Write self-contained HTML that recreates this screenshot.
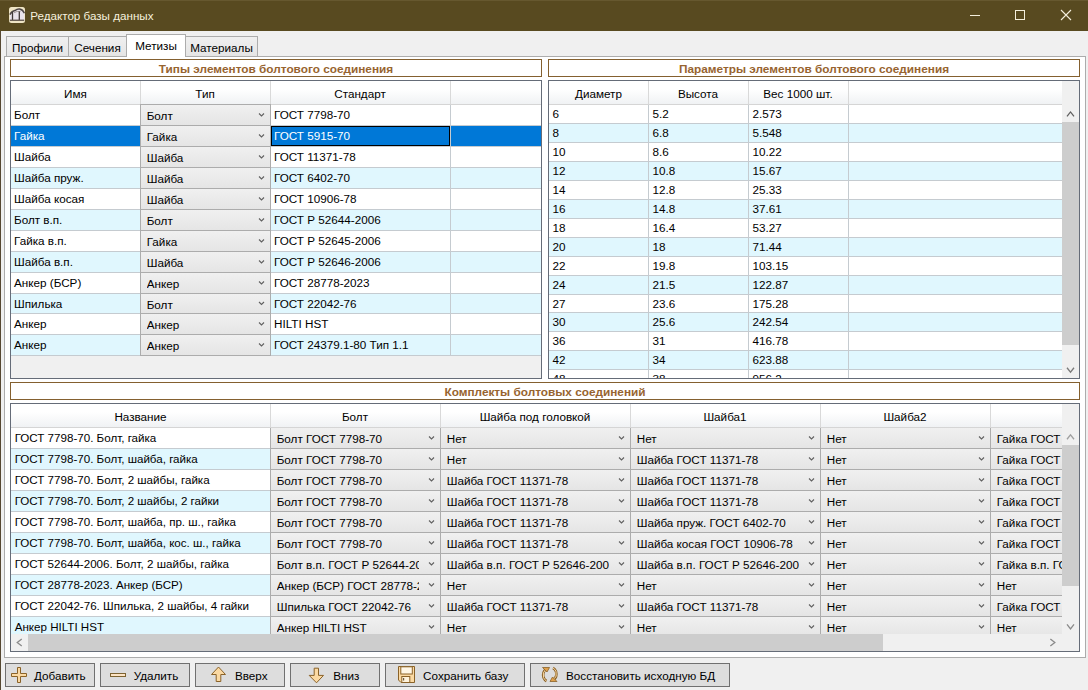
<!DOCTYPE html>
<html><head><meta charset="utf-8"><style>
html,body{margin:0;padding:0;}
body{width:1088px;height:690px;position:relative;overflow:hidden;background:#f0f0f0;font-family:"Liberation Sans", sans-serif;font-size:11.7px;color:#000;}
.t{position:absolute;white-space:pre;overflow:visible;}
.clip{overflow:hidden;}
</style></head><body>
<div style="position:absolute;left:0px;top:0px;width:1088px;height:31px;background:#584a20;"></div>
<div style="position:absolute;left:0px;top:0px;width:1088px;height:1px;background:#66582f;"></div>
<div style="position:absolute;left:0px;top:31px;width:1px;height:659px;background:#564832;"></div>
<svg style="position:absolute;left:9px;top:7px" width="16" height="16" viewBox="0 0 16 16"><rect x="0" y="0" width="16" height="16" rx="2.5" fill="#efe5c6"/><path d="M1 8 Q4 3.5 7 3.2 Q9 2 11 2.3 Q14 3 15.3 6.2 V13 H1 Z" fill="#e9e3ec"/><path d="M0.9 7.6 Q3 4 6 3.6 Q8.2 1.8 10.6 2.1 Q13.8 2.6 15.4 6.2" stroke="#4d4646" stroke-width="1.5" fill="none"/><path d="M5 5.8 Q8 3.6 11.5 4.6" stroke="#9a9090" stroke-width="0.9" fill="none"/><path d="M3.5 5 V13 M10.3 4.6 V13" stroke="#3f3838" stroke-width="1.3"/><rect x="0.8" y="12.6" width="14.4" height="1.3" fill="#5d524a"/></svg>
<div class="t" style="left:30.3px;top:6.8px;height:17px;line-height:17px;color:#f6f1de;font-size:11.64px;">Редактор базы данных</div>
<div style="position:absolute;left:970px;top:15px;width:10px;height:1px;background:#f4efdc;"></div>
<div style="position:absolute;left:1015px;top:10px;width:10px;height:10px;border:1px solid #f4efdc;box-sizing:border-box;"></div>
<svg style="position:absolute;left:1060px;top:9px" width="12" height="12" viewBox="0 0 12 12"><path d="M1 1 L11 11 M11 1 L1 11" stroke="#f4efdc" stroke-width="1.1"/></svg>
<div style="position:absolute;left:4px;top:56px;width:1082px;height:602px;background:#fff;border:1px solid #acacac;box-sizing:border-box;"></div>
<div style="position:absolute;left:6px;top:36px;width:63px;height:21px;background:linear-gradient(#f0f0f0,#e5e5e5);border:1px solid #acacac;box-sizing:border-box;"></div>
<div class="t" style="left:6px;top:37.5px;height:20px;line-height:20px;width:63px;text-align:center;">Профили</div>
<div style="position:absolute;left:68px;top:36px;width:59px;height:21px;background:linear-gradient(#f0f0f0,#e5e5e5);border:1px solid #acacac;box-sizing:border-box;"></div>
<div class="t" style="left:68px;top:37.5px;height:20px;line-height:20px;width:59px;text-align:center;">Сечения</div>
<div style="position:absolute;left:126px;top:34px;width:60px;height:23px;background:#fff;border:1px solid #acacac;border-bottom:none;box-sizing:border-box;z-index:2;"></div>
<div class="t" style="left:126px;top:35px;height:22px;line-height:22px;width:60px;text-align:center;z-index:3;">Метизы</div>
<div style="position:absolute;left:185px;top:36px;width:73px;height:21px;background:linear-gradient(#f0f0f0,#e5e5e5);border:1px solid #acacac;box-sizing:border-box;"></div>
<div class="t" style="left:185px;top:37.5px;height:20px;line-height:20px;width:73px;text-align:center;">Материалы</div>
<div style="position:absolute;left:10px;top:59px;width:532px;height:18px;background:#fff;border:1px solid #84602f;box-sizing:border-box;"></div>
<div class="t" style="left:10px;top:60px;height:18px;line-height:18px;width:532px;text-align:center;font-weight:bold;color:#976430;font-size:11.8px;">Типы элементов болтового соединения</div>
<div style="position:absolute;left:548px;top:59px;width:532px;height:18px;background:#fff;border:1px solid #84602f;box-sizing:border-box;"></div>
<div class="t" style="left:548px;top:60px;height:18px;line-height:18px;width:532px;text-align:center;font-weight:bold;color:#976430;font-size:11.8px;">Параметры элементов болтового соединения</div>
<div style="position:absolute;left:10px;top:382px;width:1070px;height:18px;background:#fff;border:1px solid #84602f;box-sizing:border-box;"></div>
<div class="t" style="left:10px;top:383px;height:18px;line-height:18px;width:1070px;text-align:center;font-weight:bold;color:#976430;font-size:11.8px;">Комплекты болтовых соединений</div>
<div style="position:absolute;left:10px;top:80px;width:532px;height:299px;background:#f0f0f0;border:1px solid #656c78;box-sizing:border-box;"></div>
<div style="position:absolute;left:11px;top:81px;width:530px;height:23px;background:linear-gradient(#ffffff 0%,#ffffff 35%,#f0f2f4 100%);"></div>
<div style="position:absolute;left:11px;top:104px;width:530px;height:1px;background:#d5d5d5;"></div>
<div style="position:absolute;left:140px;top:81px;width:1px;height:23px;background:#d9d9d9;"></div>
<div class="t" style="left:11px;top:82px;height:23px;line-height:23px;width:129px;text-align:center;">Имя</div>
<div style="position:absolute;left:270px;top:81px;width:1px;height:23px;background:#d9d9d9;"></div>
<div class="t" style="left:140px;top:82px;height:23px;line-height:23px;width:130px;text-align:center;">Тип</div>
<div style="position:absolute;left:450px;top:81px;width:1px;height:23px;background:#d9d9d9;"></div>
<div class="t" style="left:270px;top:82px;height:23px;line-height:23px;width:180px;text-align:center;">Стандарт</div>
<div style="position:absolute;left:11px;top:105px;width:530px;height:20px;background:#ffffff;"></div>
<div style="position:absolute;left:11px;top:125px;width:530px;height:1px;background:#c5cbd0;"></div>
<div style="position:absolute;left:450px;top:105px;width:1px;height:20px;background:#c5cbd0;"></div>
<div class="t" style="left:14px;top:105px;height:20px;line-height:20px;color:#000;">Болт</div>
<div style="position:absolute;left:140px;top:104px;width:131px;height:22px;background:linear-gradient(#f0f0f0,#e5e5e5);border:1px solid #acacac;box-sizing:border-box;"></div>
<div class="t clip" style="left:146.7px;top:106px;width:102.3px;height:19px;line-height:20px;">Болт</div>
<svg style="position:absolute;left:0;top:0;overflow:visible" width="1" height="1"><path d="M259.0 113.5 L261.5 116.0 L264.0 113.5" stroke="#606060" stroke-width="1.1" fill="none"/></svg>
<div class="t" style="left:274px;top:105px;height:20px;line-height:20px;color:#000;">ГОСТ 7798-70</div>
<div style="position:absolute;left:11px;top:126px;width:530px;height:20px;background:#0078d7;"></div>
<div style="position:absolute;left:11px;top:146px;width:530px;height:1px;background:#c5cbd0;"></div>
<div style="position:absolute;left:450px;top:126px;width:1px;height:20px;background:#c5cbd0;"></div>
<div class="t" style="left:14px;top:126px;height:20px;line-height:20px;color:#ffffff;">Гайка</div>
<div style="position:absolute;left:140px;top:125px;width:131px;height:22px;background:linear-gradient(#f0f0f0,#e5e5e5);border:1px solid #acacac;box-sizing:border-box;"></div>
<div class="t clip" style="left:146.7px;top:127px;width:102.3px;height:19px;line-height:20px;">Гайка</div>
<svg style="position:absolute;left:0;top:0;overflow:visible" width="1" height="1"><path d="M259.0 134.5 L261.5 137.0 L264.0 134.5" stroke="#606060" stroke-width="1.1" fill="none"/></svg>
<div style="position:absolute;left:271px;top:126px;width:179px;height:20px;border:1px solid #000;box-sizing:border-box;"></div>
<div class="t" style="left:274px;top:126px;height:20px;line-height:20px;color:#ffffff;">ГОСТ 5915-70</div>
<div style="position:absolute;left:11px;top:147px;width:530px;height:20px;background:#ffffff;"></div>
<div style="position:absolute;left:11px;top:167px;width:530px;height:1px;background:#c5cbd0;"></div>
<div style="position:absolute;left:450px;top:147px;width:1px;height:20px;background:#c5cbd0;"></div>
<div class="t" style="left:14px;top:147px;height:20px;line-height:20px;color:#000;">Шайба</div>
<div style="position:absolute;left:140px;top:146px;width:131px;height:22px;background:linear-gradient(#f0f0f0,#e5e5e5);border:1px solid #acacac;box-sizing:border-box;"></div>
<div class="t clip" style="left:146.7px;top:148px;width:102.3px;height:19px;line-height:20px;">Шайба</div>
<svg style="position:absolute;left:0;top:0;overflow:visible" width="1" height="1"><path d="M259.0 155.5 L261.5 158.0 L264.0 155.5" stroke="#606060" stroke-width="1.1" fill="none"/></svg>
<div class="t" style="left:274px;top:147px;height:20px;line-height:20px;color:#000;">ГОСТ 11371-78</div>
<div style="position:absolute;left:11px;top:168px;width:530px;height:20px;background:#e0f7fe;"></div>
<div style="position:absolute;left:11px;top:188px;width:530px;height:1px;background:#c5cbd0;"></div>
<div style="position:absolute;left:450px;top:168px;width:1px;height:20px;background:#c5cbd0;"></div>
<div class="t" style="left:14px;top:168px;height:20px;line-height:20px;color:#000;">Шайба пруж.</div>
<div style="position:absolute;left:140px;top:167px;width:131px;height:22px;background:linear-gradient(#f0f0f0,#e5e5e5);border:1px solid #acacac;box-sizing:border-box;"></div>
<div class="t clip" style="left:146.7px;top:169px;width:102.3px;height:19px;line-height:20px;">Шайба</div>
<svg style="position:absolute;left:0;top:0;overflow:visible" width="1" height="1"><path d="M259.0 176.5 L261.5 179.0 L264.0 176.5" stroke="#606060" stroke-width="1.1" fill="none"/></svg>
<div class="t" style="left:274px;top:168px;height:20px;line-height:20px;color:#000;">ГОСТ 6402-70</div>
<div style="position:absolute;left:11px;top:189px;width:530px;height:20px;background:#ffffff;"></div>
<div style="position:absolute;left:11px;top:209px;width:530px;height:1px;background:#c5cbd0;"></div>
<div style="position:absolute;left:450px;top:189px;width:1px;height:20px;background:#c5cbd0;"></div>
<div class="t" style="left:14px;top:189px;height:20px;line-height:20px;color:#000;">Шайба косая</div>
<div style="position:absolute;left:140px;top:188px;width:131px;height:22px;background:linear-gradient(#f0f0f0,#e5e5e5);border:1px solid #acacac;box-sizing:border-box;"></div>
<div class="t clip" style="left:146.7px;top:190px;width:102.3px;height:19px;line-height:20px;">Шайба</div>
<svg style="position:absolute;left:0;top:0;overflow:visible" width="1" height="1"><path d="M259.0 197.5 L261.5 200.0 L264.0 197.5" stroke="#606060" stroke-width="1.1" fill="none"/></svg>
<div class="t" style="left:274px;top:189px;height:20px;line-height:20px;color:#000;">ГОСТ 10906-78</div>
<div style="position:absolute;left:11px;top:210px;width:530px;height:20px;background:#e0f7fe;"></div>
<div style="position:absolute;left:11px;top:230px;width:530px;height:1px;background:#c5cbd0;"></div>
<div style="position:absolute;left:450px;top:210px;width:1px;height:20px;background:#c5cbd0;"></div>
<div class="t" style="left:14px;top:210px;height:20px;line-height:20px;color:#000;">Болт в.п.</div>
<div style="position:absolute;left:140px;top:209px;width:131px;height:22px;background:linear-gradient(#f0f0f0,#e5e5e5);border:1px solid #acacac;box-sizing:border-box;"></div>
<div class="t clip" style="left:146.7px;top:211px;width:102.3px;height:19px;line-height:20px;">Болт</div>
<svg style="position:absolute;left:0;top:0;overflow:visible" width="1" height="1"><path d="M259.0 218.5 L261.5 221.0 L264.0 218.5" stroke="#606060" stroke-width="1.1" fill="none"/></svg>
<div class="t" style="left:274px;top:210px;height:20px;line-height:20px;color:#000;">ГОСТ Р 52644-2006</div>
<div style="position:absolute;left:11px;top:231px;width:530px;height:20px;background:#ffffff;"></div>
<div style="position:absolute;left:11px;top:251px;width:530px;height:1px;background:#c5cbd0;"></div>
<div style="position:absolute;left:450px;top:231px;width:1px;height:20px;background:#c5cbd0;"></div>
<div class="t" style="left:14px;top:231px;height:20px;line-height:20px;color:#000;">Гайка в.п.</div>
<div style="position:absolute;left:140px;top:230px;width:131px;height:22px;background:linear-gradient(#f0f0f0,#e5e5e5);border:1px solid #acacac;box-sizing:border-box;"></div>
<div class="t clip" style="left:146.7px;top:232px;width:102.3px;height:19px;line-height:20px;">Гайка</div>
<svg style="position:absolute;left:0;top:0;overflow:visible" width="1" height="1"><path d="M259.0 239.5 L261.5 242.0 L264.0 239.5" stroke="#606060" stroke-width="1.1" fill="none"/></svg>
<div class="t" style="left:274px;top:231px;height:20px;line-height:20px;color:#000;">ГОСТ Р 52645-2006</div>
<div style="position:absolute;left:11px;top:252px;width:530px;height:20px;background:#e0f7fe;"></div>
<div style="position:absolute;left:11px;top:272px;width:530px;height:1px;background:#c5cbd0;"></div>
<div style="position:absolute;left:450px;top:252px;width:1px;height:20px;background:#c5cbd0;"></div>
<div class="t" style="left:14px;top:252px;height:20px;line-height:20px;color:#000;">Шайба в.п.</div>
<div style="position:absolute;left:140px;top:251px;width:131px;height:22px;background:linear-gradient(#f0f0f0,#e5e5e5);border:1px solid #acacac;box-sizing:border-box;"></div>
<div class="t clip" style="left:146.7px;top:253px;width:102.3px;height:19px;line-height:20px;">Шайба</div>
<svg style="position:absolute;left:0;top:0;overflow:visible" width="1" height="1"><path d="M259.0 260.5 L261.5 263.0 L264.0 260.5" stroke="#606060" stroke-width="1.1" fill="none"/></svg>
<div class="t" style="left:274px;top:252px;height:20px;line-height:20px;color:#000;">ГОСТ Р 52646-2006</div>
<div style="position:absolute;left:11px;top:273px;width:530px;height:20px;background:#ffffff;"></div>
<div style="position:absolute;left:11px;top:293px;width:530px;height:1px;background:#c5cbd0;"></div>
<div style="position:absolute;left:450px;top:273px;width:1px;height:20px;background:#c5cbd0;"></div>
<div class="t" style="left:14px;top:273px;height:20px;line-height:20px;color:#000;">Анкер (БСР)</div>
<div style="position:absolute;left:140px;top:272px;width:131px;height:22px;background:linear-gradient(#f0f0f0,#e5e5e5);border:1px solid #acacac;box-sizing:border-box;"></div>
<div class="t clip" style="left:146.7px;top:274px;width:102.3px;height:19px;line-height:20px;">Анкер</div>
<svg style="position:absolute;left:0;top:0;overflow:visible" width="1" height="1"><path d="M259.0 281.5 L261.5 284.0 L264.0 281.5" stroke="#606060" stroke-width="1.1" fill="none"/></svg>
<div class="t" style="left:274px;top:273px;height:20px;line-height:20px;color:#000;">ГОСТ 28778-2023</div>
<div style="position:absolute;left:11px;top:294px;width:530px;height:19px;background:#e0f7fe;"></div>
<div style="position:absolute;left:11px;top:313px;width:530px;height:1px;background:#c5cbd0;"></div>
<div style="position:absolute;left:450px;top:294px;width:1px;height:19px;background:#c5cbd0;"></div>
<div class="t" style="left:14px;top:294px;height:19px;line-height:19px;color:#000;">Шпилька</div>
<div style="position:absolute;left:140px;top:293px;width:131px;height:21px;background:linear-gradient(#f0f0f0,#e5e5e5);border:1px solid #acacac;box-sizing:border-box;"></div>
<div class="t clip" style="left:146.7px;top:295px;width:102.3px;height:18px;line-height:19px;">Болт</div>
<svg style="position:absolute;left:0;top:0;overflow:visible" width="1" height="1"><path d="M259.0 302.0 L261.5 304.5 L264.0 302.0" stroke="#606060" stroke-width="1.1" fill="none"/></svg>
<div class="t" style="left:274px;top:294px;height:19px;line-height:19px;color:#000;">ГОСТ 22042-76</div>
<div style="position:absolute;left:11px;top:314px;width:530px;height:20px;background:#ffffff;"></div>
<div style="position:absolute;left:11px;top:334px;width:530px;height:1px;background:#c5cbd0;"></div>
<div style="position:absolute;left:450px;top:314px;width:1px;height:20px;background:#c5cbd0;"></div>
<div class="t" style="left:14px;top:314px;height:20px;line-height:20px;color:#000;">Анкер</div>
<div style="position:absolute;left:140px;top:313px;width:131px;height:22px;background:linear-gradient(#f0f0f0,#e5e5e5);border:1px solid #acacac;box-sizing:border-box;"></div>
<div class="t clip" style="left:146.7px;top:315px;width:102.3px;height:19px;line-height:20px;">Анкер</div>
<svg style="position:absolute;left:0;top:0;overflow:visible" width="1" height="1"><path d="M259.0 322.5 L261.5 325.0 L264.0 322.5" stroke="#606060" stroke-width="1.1" fill="none"/></svg>
<div class="t" style="left:274px;top:314px;height:20px;line-height:20px;color:#000;">HILTI HST</div>
<div style="position:absolute;left:11px;top:335px;width:530px;height:20px;background:#e0f7fe;"></div>
<div style="position:absolute;left:11px;top:355px;width:530px;height:1px;background:#c5cbd0;"></div>
<div style="position:absolute;left:450px;top:335px;width:1px;height:20px;background:#c5cbd0;"></div>
<div class="t" style="left:14px;top:335px;height:20px;line-height:20px;color:#000;">Анкер</div>
<div style="position:absolute;left:140px;top:334px;width:131px;height:22px;background:linear-gradient(#f0f0f0,#e5e5e5);border:1px solid #acacac;box-sizing:border-box;"></div>
<div class="t clip" style="left:146.7px;top:336px;width:102.3px;height:19px;line-height:20px;">Анкер</div>
<svg style="position:absolute;left:0;top:0;overflow:visible" width="1" height="1"><path d="M259.0 343.5 L261.5 346.0 L264.0 343.5" stroke="#606060" stroke-width="1.1" fill="none"/></svg>
<div class="t" style="left:274px;top:335px;height:20px;line-height:20px;color:#000;">ГОСТ 24379.1-80 Тип 1.1</div>
<div style="position:absolute;left:548px;top:80px;width:532px;height:299px;background:#ffffff;border:1px solid #656c78;box-sizing:border-box;"></div>
<div style="position:absolute;left:549px;top:81px;width:513px;height:23px;background:linear-gradient(#ffffff 0%,#ffffff 35%,#f0f2f4 100%);"></div>
<div style="position:absolute;left:549px;top:104px;width:513px;height:1px;background:#d5d5d5;"></div>
<div style="position:absolute;left:648px;top:81px;width:1px;height:23px;background:#d9d9d9;"></div>
<div class="t" style="left:549px;top:82px;height:23px;line-height:23px;width:99px;text-align:center;">Диаметр</div>
<div style="position:absolute;left:748px;top:81px;width:1px;height:23px;background:#d9d9d9;"></div>
<div class="t" style="left:648px;top:82px;height:23px;line-height:23px;width:100px;text-align:center;">Высота</div>
<div style="position:absolute;left:848px;top:81px;width:1px;height:23px;background:#d9d9d9;"></div>
<div class="t" style="left:748px;top:82px;height:23px;line-height:23px;width:100px;text-align:center;">Вес 1000 шт.</div>
<div style="position:absolute;left:549px;top:105px;width:513px;height:18px;background:#ffffff;overflow:hidden;"></div>
<div style="position:absolute;left:549px;top:123px;width:513px;height:1px;background:#c5cbd0;"></div>
<div style="position:absolute;left:648px;top:105px;width:1px;height:18px;background:#c5cbd0;"></div>
<div style="position:absolute;left:748px;top:105px;width:1px;height:18px;background:#c5cbd0;"></div>
<div style="position:absolute;left:848px;top:105px;width:1px;height:18px;background:#c5cbd0;"></div>
<div class="clip" style="position:absolute;left:549px;top:105px;width:512px;height:18px;">
<div class="t" style="left:3.5px;top:0px;height:18px;line-height:18px;">6</div>
<div class="t" style="left:103.5px;top:0px;height:18px;line-height:18px;">5.2</div>
<div class="t" style="left:203.5px;top:0px;height:18px;line-height:18px;">2.573</div>
</div>
<div style="position:absolute;left:549px;top:124px;width:513px;height:18px;background:#e0f7fe;overflow:hidden;"></div>
<div style="position:absolute;left:549px;top:142px;width:513px;height:1px;background:#c5cbd0;"></div>
<div style="position:absolute;left:648px;top:124px;width:1px;height:18px;background:#c5cbd0;"></div>
<div style="position:absolute;left:748px;top:124px;width:1px;height:18px;background:#c5cbd0;"></div>
<div style="position:absolute;left:848px;top:124px;width:1px;height:18px;background:#c5cbd0;"></div>
<div class="clip" style="position:absolute;left:549px;top:124px;width:512px;height:18px;">
<div class="t" style="left:3.5px;top:0px;height:18px;line-height:18px;">8</div>
<div class="t" style="left:103.5px;top:0px;height:18px;line-height:18px;">6.8</div>
<div class="t" style="left:203.5px;top:0px;height:18px;line-height:18px;">5.548</div>
</div>
<div style="position:absolute;left:549px;top:143px;width:513px;height:18px;background:#ffffff;overflow:hidden;"></div>
<div style="position:absolute;left:549px;top:161px;width:513px;height:1px;background:#c5cbd0;"></div>
<div style="position:absolute;left:648px;top:143px;width:1px;height:18px;background:#c5cbd0;"></div>
<div style="position:absolute;left:748px;top:143px;width:1px;height:18px;background:#c5cbd0;"></div>
<div style="position:absolute;left:848px;top:143px;width:1px;height:18px;background:#c5cbd0;"></div>
<div class="clip" style="position:absolute;left:549px;top:143px;width:512px;height:18px;">
<div class="t" style="left:3.5px;top:0px;height:18px;line-height:18px;">10</div>
<div class="t" style="left:103.5px;top:0px;height:18px;line-height:18px;">8.6</div>
<div class="t" style="left:203.5px;top:0px;height:18px;line-height:18px;">10.22</div>
</div>
<div style="position:absolute;left:549px;top:162px;width:513px;height:18px;background:#e0f7fe;overflow:hidden;"></div>
<div style="position:absolute;left:549px;top:180px;width:513px;height:1px;background:#c5cbd0;"></div>
<div style="position:absolute;left:648px;top:162px;width:1px;height:18px;background:#c5cbd0;"></div>
<div style="position:absolute;left:748px;top:162px;width:1px;height:18px;background:#c5cbd0;"></div>
<div style="position:absolute;left:848px;top:162px;width:1px;height:18px;background:#c5cbd0;"></div>
<div class="clip" style="position:absolute;left:549px;top:162px;width:512px;height:18px;">
<div class="t" style="left:3.5px;top:0px;height:18px;line-height:18px;">12</div>
<div class="t" style="left:103.5px;top:0px;height:18px;line-height:18px;">10.8</div>
<div class="t" style="left:203.5px;top:0px;height:18px;line-height:18px;">15.67</div>
</div>
<div style="position:absolute;left:549px;top:181px;width:513px;height:18px;background:#ffffff;overflow:hidden;"></div>
<div style="position:absolute;left:549px;top:199px;width:513px;height:1px;background:#c5cbd0;"></div>
<div style="position:absolute;left:648px;top:181px;width:1px;height:18px;background:#c5cbd0;"></div>
<div style="position:absolute;left:748px;top:181px;width:1px;height:18px;background:#c5cbd0;"></div>
<div style="position:absolute;left:848px;top:181px;width:1px;height:18px;background:#c5cbd0;"></div>
<div class="clip" style="position:absolute;left:549px;top:181px;width:512px;height:18px;">
<div class="t" style="left:3.5px;top:0px;height:18px;line-height:18px;">14</div>
<div class="t" style="left:103.5px;top:0px;height:18px;line-height:18px;">12.8</div>
<div class="t" style="left:203.5px;top:0px;height:18px;line-height:18px;">25.33</div>
</div>
<div style="position:absolute;left:549px;top:200px;width:513px;height:18px;background:#e0f7fe;overflow:hidden;"></div>
<div style="position:absolute;left:549px;top:218px;width:513px;height:1px;background:#c5cbd0;"></div>
<div style="position:absolute;left:648px;top:200px;width:1px;height:18px;background:#c5cbd0;"></div>
<div style="position:absolute;left:748px;top:200px;width:1px;height:18px;background:#c5cbd0;"></div>
<div style="position:absolute;left:848px;top:200px;width:1px;height:18px;background:#c5cbd0;"></div>
<div class="clip" style="position:absolute;left:549px;top:200px;width:512px;height:18px;">
<div class="t" style="left:3.5px;top:0px;height:18px;line-height:18px;">16</div>
<div class="t" style="left:103.5px;top:0px;height:18px;line-height:18px;">14.8</div>
<div class="t" style="left:203.5px;top:0px;height:18px;line-height:18px;">37.61</div>
</div>
<div style="position:absolute;left:549px;top:219px;width:513px;height:18px;background:#ffffff;overflow:hidden;"></div>
<div style="position:absolute;left:549px;top:237px;width:513px;height:1px;background:#c5cbd0;"></div>
<div style="position:absolute;left:648px;top:219px;width:1px;height:18px;background:#c5cbd0;"></div>
<div style="position:absolute;left:748px;top:219px;width:1px;height:18px;background:#c5cbd0;"></div>
<div style="position:absolute;left:848px;top:219px;width:1px;height:18px;background:#c5cbd0;"></div>
<div class="clip" style="position:absolute;left:549px;top:219px;width:512px;height:18px;">
<div class="t" style="left:3.5px;top:0px;height:18px;line-height:18px;">18</div>
<div class="t" style="left:103.5px;top:0px;height:18px;line-height:18px;">16.4</div>
<div class="t" style="left:203.5px;top:0px;height:18px;line-height:18px;">53.27</div>
</div>
<div style="position:absolute;left:549px;top:238px;width:513px;height:18px;background:#e0f7fe;overflow:hidden;"></div>
<div style="position:absolute;left:549px;top:256px;width:513px;height:1px;background:#c5cbd0;"></div>
<div style="position:absolute;left:648px;top:238px;width:1px;height:18px;background:#c5cbd0;"></div>
<div style="position:absolute;left:748px;top:238px;width:1px;height:18px;background:#c5cbd0;"></div>
<div style="position:absolute;left:848px;top:238px;width:1px;height:18px;background:#c5cbd0;"></div>
<div class="clip" style="position:absolute;left:549px;top:238px;width:512px;height:18px;">
<div class="t" style="left:3.5px;top:0px;height:18px;line-height:18px;">20</div>
<div class="t" style="left:103.5px;top:0px;height:18px;line-height:18px;">18</div>
<div class="t" style="left:203.5px;top:0px;height:18px;line-height:18px;">71.44</div>
</div>
<div style="position:absolute;left:549px;top:257px;width:513px;height:18px;background:#ffffff;overflow:hidden;"></div>
<div style="position:absolute;left:549px;top:275px;width:513px;height:1px;background:#c5cbd0;"></div>
<div style="position:absolute;left:648px;top:257px;width:1px;height:18px;background:#c5cbd0;"></div>
<div style="position:absolute;left:748px;top:257px;width:1px;height:18px;background:#c5cbd0;"></div>
<div style="position:absolute;left:848px;top:257px;width:1px;height:18px;background:#c5cbd0;"></div>
<div class="clip" style="position:absolute;left:549px;top:257px;width:512px;height:18px;">
<div class="t" style="left:3.5px;top:0px;height:18px;line-height:18px;">22</div>
<div class="t" style="left:103.5px;top:0px;height:18px;line-height:18px;">19.8</div>
<div class="t" style="left:203.5px;top:0px;height:18px;line-height:18px;">103.15</div>
</div>
<div style="position:absolute;left:549px;top:276px;width:513px;height:18px;background:#e0f7fe;overflow:hidden;"></div>
<div style="position:absolute;left:549px;top:294px;width:513px;height:1px;background:#c5cbd0;"></div>
<div style="position:absolute;left:648px;top:276px;width:1px;height:18px;background:#c5cbd0;"></div>
<div style="position:absolute;left:748px;top:276px;width:1px;height:18px;background:#c5cbd0;"></div>
<div style="position:absolute;left:848px;top:276px;width:1px;height:18px;background:#c5cbd0;"></div>
<div class="clip" style="position:absolute;left:549px;top:276px;width:512px;height:18px;">
<div class="t" style="left:3.5px;top:0px;height:18px;line-height:18px;">24</div>
<div class="t" style="left:103.5px;top:0px;height:18px;line-height:18px;">21.5</div>
<div class="t" style="left:203.5px;top:0px;height:18px;line-height:18px;">122.87</div>
</div>
<div style="position:absolute;left:549px;top:295px;width:513px;height:17px;background:#ffffff;overflow:hidden;"></div>
<div style="position:absolute;left:549px;top:312px;width:513px;height:1px;background:#c5cbd0;"></div>
<div style="position:absolute;left:648px;top:295px;width:1px;height:17px;background:#c5cbd0;"></div>
<div style="position:absolute;left:748px;top:295px;width:1px;height:17px;background:#c5cbd0;"></div>
<div style="position:absolute;left:848px;top:295px;width:1px;height:17px;background:#c5cbd0;"></div>
<div class="clip" style="position:absolute;left:549px;top:295px;width:512px;height:17px;">
<div class="t" style="left:3.5px;top:0px;height:18px;line-height:18px;">27</div>
<div class="t" style="left:103.5px;top:0px;height:18px;line-height:18px;">23.6</div>
<div class="t" style="left:203.5px;top:0px;height:18px;line-height:18px;">175.28</div>
</div>
<div style="position:absolute;left:549px;top:313px;width:513px;height:18px;background:#e0f7fe;overflow:hidden;"></div>
<div style="position:absolute;left:549px;top:331px;width:513px;height:1px;background:#c5cbd0;"></div>
<div style="position:absolute;left:648px;top:313px;width:1px;height:18px;background:#c5cbd0;"></div>
<div style="position:absolute;left:748px;top:313px;width:1px;height:18px;background:#c5cbd0;"></div>
<div style="position:absolute;left:848px;top:313px;width:1px;height:18px;background:#c5cbd0;"></div>
<div class="clip" style="position:absolute;left:549px;top:313px;width:512px;height:18px;">
<div class="t" style="left:3.5px;top:0px;height:18px;line-height:18px;">30</div>
<div class="t" style="left:103.5px;top:0px;height:18px;line-height:18px;">25.6</div>
<div class="t" style="left:203.5px;top:0px;height:18px;line-height:18px;">242.54</div>
</div>
<div style="position:absolute;left:549px;top:332px;width:513px;height:18px;background:#ffffff;overflow:hidden;"></div>
<div style="position:absolute;left:549px;top:350px;width:513px;height:1px;background:#c5cbd0;"></div>
<div style="position:absolute;left:648px;top:332px;width:1px;height:18px;background:#c5cbd0;"></div>
<div style="position:absolute;left:748px;top:332px;width:1px;height:18px;background:#c5cbd0;"></div>
<div style="position:absolute;left:848px;top:332px;width:1px;height:18px;background:#c5cbd0;"></div>
<div class="clip" style="position:absolute;left:549px;top:332px;width:512px;height:18px;">
<div class="t" style="left:3.5px;top:0px;height:18px;line-height:18px;">36</div>
<div class="t" style="left:103.5px;top:0px;height:18px;line-height:18px;">31</div>
<div class="t" style="left:203.5px;top:0px;height:18px;line-height:18px;">416.78</div>
</div>
<div style="position:absolute;left:549px;top:351px;width:513px;height:18px;background:#e0f7fe;overflow:hidden;"></div>
<div style="position:absolute;left:549px;top:369px;width:513px;height:1px;background:#c5cbd0;"></div>
<div style="position:absolute;left:648px;top:351px;width:1px;height:18px;background:#c5cbd0;"></div>
<div style="position:absolute;left:748px;top:351px;width:1px;height:18px;background:#c5cbd0;"></div>
<div style="position:absolute;left:848px;top:351px;width:1px;height:18px;background:#c5cbd0;"></div>
<div class="clip" style="position:absolute;left:549px;top:351px;width:512px;height:18px;">
<div class="t" style="left:3.5px;top:0px;height:18px;line-height:18px;">42</div>
<div class="t" style="left:103.5px;top:0px;height:18px;line-height:18px;">34</div>
<div class="t" style="left:203.5px;top:0px;height:18px;line-height:18px;">623.88</div>
</div>
<div style="position:absolute;left:549px;top:370px;width:513px;height:8px;background:#ffffff;overflow:hidden;"></div>
<div style="position:absolute;left:648px;top:370px;width:1px;height:8px;background:#c5cbd0;"></div>
<div style="position:absolute;left:748px;top:370px;width:1px;height:8px;background:#c5cbd0;"></div>
<div style="position:absolute;left:848px;top:370px;width:1px;height:8px;background:#c5cbd0;"></div>
<div class="clip" style="position:absolute;left:549px;top:370px;width:512px;height:8px;">
<div class="t" style="left:3.5px;top:0px;height:18px;line-height:18px;">48</div>
<div class="t" style="left:103.5px;top:0px;height:18px;line-height:18px;">38</div>
<div class="t" style="left:203.5px;top:0px;height:18px;line-height:18px;">956.2</div>
</div>
<div style="position:absolute;left:1062px;top:81px;width:17px;height:297px;background:#f0f0f0;"></div>
<div style="position:absolute;left:1062px;top:122px;width:17px;height:223px;background:#cdcdcd;"></div>
<svg style="position:absolute;left:0;top:0;overflow:visible" width="1" height="1"><path d="M1067.0 116.45 L1070.5 111.95 L1074.0 116.45" stroke="#606060" stroke-width="1.3" fill="none"/></svg>
<svg style="position:absolute;left:0;top:0;overflow:visible" width="1" height="1"><path d="M1067.0 367.75 L1070.5 372.25 L1074.0 367.75" stroke="#7a7a7a" stroke-width="1.3" fill="none"/></svg>
<div style="position:absolute;left:10px;top:403px;width:1070px;height:249px;background:#ffffff;border:1px solid #656c78;box-sizing:border-box;"></div>
<div style="position:absolute;left:11px;top:404px;width:1051px;height:23px;background:linear-gradient(#ffffff 0%,#ffffff 35%,#f0f2f4 100%);"></div>
<div style="position:absolute;left:11px;top:427px;width:1051px;height:1px;background:#d5d5d5;"></div>
<div style="position:absolute;left:270px;top:404px;width:1px;height:23px;background:#d9d9d9;"></div>
<div class="t" style="left:11px;top:405px;height:23px;line-height:23px;width:259px;text-align:center;">Название</div>
<div style="position:absolute;left:440px;top:404px;width:1px;height:23px;background:#d9d9d9;"></div>
<div class="t" style="left:270px;top:405px;height:23px;line-height:23px;width:170px;text-align:center;">Болт</div>
<div style="position:absolute;left:630px;top:404px;width:1px;height:23px;background:#d9d9d9;"></div>
<div class="t" style="left:440px;top:405px;height:23px;line-height:23px;width:190px;text-align:center;">Шайба под головкой</div>
<div style="position:absolute;left:820px;top:404px;width:1px;height:23px;background:#d9d9d9;"></div>
<div class="t" style="left:630px;top:405px;height:23px;line-height:23px;width:190px;text-align:center;">Шайба1</div>
<div style="position:absolute;left:990px;top:404px;width:1px;height:23px;background:#d9d9d9;"></div>
<div class="t" style="left:820px;top:405px;height:23px;line-height:23px;width:170px;text-align:center;">Шайба2</div>
<div style="position:absolute;left:1180px;top:404px;width:1px;height:23px;background:#d9d9d9;"></div>
<div class="clip" style="position:absolute;left:11px;top:428px;width:1051px;height:206px;">
<div style="position:absolute;left:0px;top:0px;width:1051px;height:20px;background:#ffffff;"></div>
<div style="position:absolute;left:0px;top:20px;width:1051px;height:1px;background:#c5cbd0;"></div>
<div class="t" style="left:3.7px;top:0px;height:20px;line-height:20px;font-size:11.6px;">ГОСТ 7798-70. Болт, гайка</div>
<div style="position:absolute;left:259px;top:-1px;width:171px;height:22px;background:linear-gradient(#f0f0f0,#e5e5e5);border:1px solid #acacac;box-sizing:border-box;"></div>
<div class="t clip" style="left:265.7px;top:1px;width:142.3px;height:19px;line-height:20px;">Болт ГОСТ 7798-70</div>
<svg style="position:absolute;left:0;top:0;overflow:visible" width="1" height="1"><path d="M418.0 8.5 L420.5 11.0 L423.0 8.5" stroke="#606060" stroke-width="1.1" fill="none"/></svg>
<div style="position:absolute;left:429px;top:-1px;width:191px;height:22px;background:linear-gradient(#f0f0f0,#e5e5e5);border:1px solid #acacac;box-sizing:border-box;"></div>
<div class="t clip" style="left:435.7px;top:1px;width:162.3px;height:19px;line-height:20px;">Нет</div>
<svg style="position:absolute;left:0;top:0;overflow:visible" width="1" height="1"><path d="M608.0 8.5 L610.5 11.0 L613.0 8.5" stroke="#606060" stroke-width="1.1" fill="none"/></svg>
<div style="position:absolute;left:619px;top:-1px;width:191px;height:22px;background:linear-gradient(#f0f0f0,#e5e5e5);border:1px solid #acacac;box-sizing:border-box;"></div>
<div class="t clip" style="left:625.7px;top:1px;width:162.3px;height:19px;line-height:20px;">Нет</div>
<svg style="position:absolute;left:0;top:0;overflow:visible" width="1" height="1"><path d="M798.0 8.5 L800.5 11.0 L803.0 8.5" stroke="#606060" stroke-width="1.1" fill="none"/></svg>
<div style="position:absolute;left:809px;top:-1px;width:171px;height:22px;background:linear-gradient(#f0f0f0,#e5e5e5);border:1px solid #acacac;box-sizing:border-box;"></div>
<div class="t clip" style="left:815.7px;top:1px;width:142.3px;height:19px;line-height:20px;">Нет</div>
<svg style="position:absolute;left:0;top:0;overflow:visible" width="1" height="1"><path d="M968.0 8.5 L970.5 11.0 L973.0 8.5" stroke="#606060" stroke-width="1.1" fill="none"/></svg>
<div style="position:absolute;left:979px;top:-1px;width:191px;height:22px;background:linear-gradient(#f0f0f0,#e5e5e5);border:1px solid #acacac;box-sizing:border-box;"></div>
<div class="t clip" style="left:985.7px;top:1px;width:162.3px;height:19px;line-height:20px;">Гайка ГОСТ 5915-70</div>
<svg style="position:absolute;left:0;top:0;overflow:visible" width="1" height="1"><path d="M1158.0 8.5 L1160.5 11.0 L1163.0 8.5" stroke="#606060" stroke-width="1.1" fill="none"/></svg>
<div style="position:absolute;left:0px;top:21px;width:1051px;height:20px;background:#e0f7fe;"></div>
<div style="position:absolute;left:0px;top:41px;width:1051px;height:1px;background:#c5cbd0;"></div>
<div class="t" style="left:3.7px;top:21px;height:20px;line-height:20px;font-size:11.6px;">ГОСТ 7798-70. Болт, шайба, гайка</div>
<div style="position:absolute;left:259px;top:20px;width:171px;height:22px;background:linear-gradient(#f0f0f0,#e5e5e5);border:1px solid #acacac;box-sizing:border-box;"></div>
<div class="t clip" style="left:265.7px;top:22px;width:142.3px;height:19px;line-height:20px;">Болт ГОСТ 7798-70</div>
<svg style="position:absolute;left:0;top:0;overflow:visible" width="1" height="1"><path d="M418.0 29.5 L420.5 32.0 L423.0 29.5" stroke="#606060" stroke-width="1.1" fill="none"/></svg>
<div style="position:absolute;left:429px;top:20px;width:191px;height:22px;background:linear-gradient(#f0f0f0,#e5e5e5);border:1px solid #acacac;box-sizing:border-box;"></div>
<div class="t clip" style="left:435.7px;top:22px;width:162.3px;height:19px;line-height:20px;">Нет</div>
<svg style="position:absolute;left:0;top:0;overflow:visible" width="1" height="1"><path d="M608.0 29.5 L610.5 32.0 L613.0 29.5" stroke="#606060" stroke-width="1.1" fill="none"/></svg>
<div style="position:absolute;left:619px;top:20px;width:191px;height:22px;background:linear-gradient(#f0f0f0,#e5e5e5);border:1px solid #acacac;box-sizing:border-box;"></div>
<div class="t clip" style="left:625.7px;top:22px;width:162.3px;height:19px;line-height:20px;">Шайба ГОСТ 11371-78</div>
<svg style="position:absolute;left:0;top:0;overflow:visible" width="1" height="1"><path d="M798.0 29.5 L800.5 32.0 L803.0 29.5" stroke="#606060" stroke-width="1.1" fill="none"/></svg>
<div style="position:absolute;left:809px;top:20px;width:171px;height:22px;background:linear-gradient(#f0f0f0,#e5e5e5);border:1px solid #acacac;box-sizing:border-box;"></div>
<div class="t clip" style="left:815.7px;top:22px;width:142.3px;height:19px;line-height:20px;">Нет</div>
<svg style="position:absolute;left:0;top:0;overflow:visible" width="1" height="1"><path d="M968.0 29.5 L970.5 32.0 L973.0 29.5" stroke="#606060" stroke-width="1.1" fill="none"/></svg>
<div style="position:absolute;left:979px;top:20px;width:191px;height:22px;background:linear-gradient(#f0f0f0,#e5e5e5);border:1px solid #acacac;box-sizing:border-box;"></div>
<div class="t clip" style="left:985.7px;top:22px;width:162.3px;height:19px;line-height:20px;">Гайка ГОСТ 5915-70</div>
<svg style="position:absolute;left:0;top:0;overflow:visible" width="1" height="1"><path d="M1158.0 29.5 L1160.5 32.0 L1163.0 29.5" stroke="#606060" stroke-width="1.1" fill="none"/></svg>
<div style="position:absolute;left:0px;top:42px;width:1051px;height:20px;background:#ffffff;"></div>
<div style="position:absolute;left:0px;top:62px;width:1051px;height:1px;background:#c5cbd0;"></div>
<div class="t" style="left:3.7px;top:42px;height:20px;line-height:20px;font-size:11.6px;">ГОСТ 7798-70. Болт, 2 шайбы, гайка</div>
<div style="position:absolute;left:259px;top:41px;width:171px;height:22px;background:linear-gradient(#f0f0f0,#e5e5e5);border:1px solid #acacac;box-sizing:border-box;"></div>
<div class="t clip" style="left:265.7px;top:43px;width:142.3px;height:19px;line-height:20px;">Болт ГОСТ 7798-70</div>
<svg style="position:absolute;left:0;top:0;overflow:visible" width="1" height="1"><path d="M418.0 50.5 L420.5 53.0 L423.0 50.5" stroke="#606060" stroke-width="1.1" fill="none"/></svg>
<div style="position:absolute;left:429px;top:41px;width:191px;height:22px;background:linear-gradient(#f0f0f0,#e5e5e5);border:1px solid #acacac;box-sizing:border-box;"></div>
<div class="t clip" style="left:435.7px;top:43px;width:162.3px;height:19px;line-height:20px;">Шайба ГОСТ 11371-78</div>
<svg style="position:absolute;left:0;top:0;overflow:visible" width="1" height="1"><path d="M608.0 50.5 L610.5 53.0 L613.0 50.5" stroke="#606060" stroke-width="1.1" fill="none"/></svg>
<div style="position:absolute;left:619px;top:41px;width:191px;height:22px;background:linear-gradient(#f0f0f0,#e5e5e5);border:1px solid #acacac;box-sizing:border-box;"></div>
<div class="t clip" style="left:625.7px;top:43px;width:162.3px;height:19px;line-height:20px;">Шайба ГОСТ 11371-78</div>
<svg style="position:absolute;left:0;top:0;overflow:visible" width="1" height="1"><path d="M798.0 50.5 L800.5 53.0 L803.0 50.5" stroke="#606060" stroke-width="1.1" fill="none"/></svg>
<div style="position:absolute;left:809px;top:41px;width:171px;height:22px;background:linear-gradient(#f0f0f0,#e5e5e5);border:1px solid #acacac;box-sizing:border-box;"></div>
<div class="t clip" style="left:815.7px;top:43px;width:142.3px;height:19px;line-height:20px;">Нет</div>
<svg style="position:absolute;left:0;top:0;overflow:visible" width="1" height="1"><path d="M968.0 50.5 L970.5 53.0 L973.0 50.5" stroke="#606060" stroke-width="1.1" fill="none"/></svg>
<div style="position:absolute;left:979px;top:41px;width:191px;height:22px;background:linear-gradient(#f0f0f0,#e5e5e5);border:1px solid #acacac;box-sizing:border-box;"></div>
<div class="t clip" style="left:985.7px;top:43px;width:162.3px;height:19px;line-height:20px;">Гайка ГОСТ 5915-70</div>
<svg style="position:absolute;left:0;top:0;overflow:visible" width="1" height="1"><path d="M1158.0 50.5 L1160.5 53.0 L1163.0 50.5" stroke="#606060" stroke-width="1.1" fill="none"/></svg>
<div style="position:absolute;left:0px;top:63px;width:1051px;height:20px;background:#e0f7fe;"></div>
<div style="position:absolute;left:0px;top:83px;width:1051px;height:1px;background:#c5cbd0;"></div>
<div class="t" style="left:3.7px;top:63px;height:20px;line-height:20px;font-size:11.6px;">ГОСТ 7798-70. Болт, 2 шайбы, 2 гайки</div>
<div style="position:absolute;left:259px;top:62px;width:171px;height:22px;background:linear-gradient(#f0f0f0,#e5e5e5);border:1px solid #acacac;box-sizing:border-box;"></div>
<div class="t clip" style="left:265.7px;top:64px;width:142.3px;height:19px;line-height:20px;">Болт ГОСТ 7798-70</div>
<svg style="position:absolute;left:0;top:0;overflow:visible" width="1" height="1"><path d="M418.0 71.5 L420.5 74.0 L423.0 71.5" stroke="#606060" stroke-width="1.1" fill="none"/></svg>
<div style="position:absolute;left:429px;top:62px;width:191px;height:22px;background:linear-gradient(#f0f0f0,#e5e5e5);border:1px solid #acacac;box-sizing:border-box;"></div>
<div class="t clip" style="left:435.7px;top:64px;width:162.3px;height:19px;line-height:20px;">Шайба ГОСТ 11371-78</div>
<svg style="position:absolute;left:0;top:0;overflow:visible" width="1" height="1"><path d="M608.0 71.5 L610.5 74.0 L613.0 71.5" stroke="#606060" stroke-width="1.1" fill="none"/></svg>
<div style="position:absolute;left:619px;top:62px;width:191px;height:22px;background:linear-gradient(#f0f0f0,#e5e5e5);border:1px solid #acacac;box-sizing:border-box;"></div>
<div class="t clip" style="left:625.7px;top:64px;width:162.3px;height:19px;line-height:20px;">Шайба ГОСТ 11371-78</div>
<svg style="position:absolute;left:0;top:0;overflow:visible" width="1" height="1"><path d="M798.0 71.5 L800.5 74.0 L803.0 71.5" stroke="#606060" stroke-width="1.1" fill="none"/></svg>
<div style="position:absolute;left:809px;top:62px;width:171px;height:22px;background:linear-gradient(#f0f0f0,#e5e5e5);border:1px solid #acacac;box-sizing:border-box;"></div>
<div class="t clip" style="left:815.7px;top:64px;width:142.3px;height:19px;line-height:20px;">Нет</div>
<svg style="position:absolute;left:0;top:0;overflow:visible" width="1" height="1"><path d="M968.0 71.5 L970.5 74.0 L973.0 71.5" stroke="#606060" stroke-width="1.1" fill="none"/></svg>
<div style="position:absolute;left:979px;top:62px;width:191px;height:22px;background:linear-gradient(#f0f0f0,#e5e5e5);border:1px solid #acacac;box-sizing:border-box;"></div>
<div class="t clip" style="left:985.7px;top:64px;width:162.3px;height:19px;line-height:20px;">Гайка ГОСТ 5915-70</div>
<svg style="position:absolute;left:0;top:0;overflow:visible" width="1" height="1"><path d="M1158.0 71.5 L1160.5 74.0 L1163.0 71.5" stroke="#606060" stroke-width="1.1" fill="none"/></svg>
<div style="position:absolute;left:0px;top:84px;width:1051px;height:20px;background:#ffffff;"></div>
<div style="position:absolute;left:0px;top:104px;width:1051px;height:1px;background:#c5cbd0;"></div>
<div class="t" style="left:3.7px;top:84px;height:20px;line-height:20px;font-size:11.6px;">ГОСТ 7798-70. Болт, шайба, пр. ш., гайка</div>
<div style="position:absolute;left:259px;top:83px;width:171px;height:22px;background:linear-gradient(#f0f0f0,#e5e5e5);border:1px solid #acacac;box-sizing:border-box;"></div>
<div class="t clip" style="left:265.7px;top:85px;width:142.3px;height:19px;line-height:20px;">Болт ГОСТ 7798-70</div>
<svg style="position:absolute;left:0;top:0;overflow:visible" width="1" height="1"><path d="M418.0 92.5 L420.5 95.0 L423.0 92.5" stroke="#606060" stroke-width="1.1" fill="none"/></svg>
<div style="position:absolute;left:429px;top:83px;width:191px;height:22px;background:linear-gradient(#f0f0f0,#e5e5e5);border:1px solid #acacac;box-sizing:border-box;"></div>
<div class="t clip" style="left:435.7px;top:85px;width:162.3px;height:19px;line-height:20px;">Шайба ГОСТ 11371-78</div>
<svg style="position:absolute;left:0;top:0;overflow:visible" width="1" height="1"><path d="M608.0 92.5 L610.5 95.0 L613.0 92.5" stroke="#606060" stroke-width="1.1" fill="none"/></svg>
<div style="position:absolute;left:619px;top:83px;width:191px;height:22px;background:linear-gradient(#f0f0f0,#e5e5e5);border:1px solid #acacac;box-sizing:border-box;"></div>
<div class="t clip" style="left:625.7px;top:85px;width:162.3px;height:19px;line-height:20px;">Шайба пруж. ГОСТ 6402-70</div>
<svg style="position:absolute;left:0;top:0;overflow:visible" width="1" height="1"><path d="M798.0 92.5 L800.5 95.0 L803.0 92.5" stroke="#606060" stroke-width="1.1" fill="none"/></svg>
<div style="position:absolute;left:809px;top:83px;width:171px;height:22px;background:linear-gradient(#f0f0f0,#e5e5e5);border:1px solid #acacac;box-sizing:border-box;"></div>
<div class="t clip" style="left:815.7px;top:85px;width:142.3px;height:19px;line-height:20px;">Нет</div>
<svg style="position:absolute;left:0;top:0;overflow:visible" width="1" height="1"><path d="M968.0 92.5 L970.5 95.0 L973.0 92.5" stroke="#606060" stroke-width="1.1" fill="none"/></svg>
<div style="position:absolute;left:979px;top:83px;width:191px;height:22px;background:linear-gradient(#f0f0f0,#e5e5e5);border:1px solid #acacac;box-sizing:border-box;"></div>
<div class="t clip" style="left:985.7px;top:85px;width:162.3px;height:19px;line-height:20px;">Гайка ГОСТ 5915-70</div>
<svg style="position:absolute;left:0;top:0;overflow:visible" width="1" height="1"><path d="M1158.0 92.5 L1160.5 95.0 L1163.0 92.5" stroke="#606060" stroke-width="1.1" fill="none"/></svg>
<div style="position:absolute;left:0px;top:105px;width:1051px;height:20px;background:#e0f7fe;"></div>
<div style="position:absolute;left:0px;top:125px;width:1051px;height:1px;background:#c5cbd0;"></div>
<div class="t" style="left:3.7px;top:105px;height:20px;line-height:20px;font-size:11.6px;">ГОСТ 7798-70. Болт, шайба, кос. ш., гайка</div>
<div style="position:absolute;left:259px;top:104px;width:171px;height:22px;background:linear-gradient(#f0f0f0,#e5e5e5);border:1px solid #acacac;box-sizing:border-box;"></div>
<div class="t clip" style="left:265.7px;top:106px;width:142.3px;height:19px;line-height:20px;">Болт ГОСТ 7798-70</div>
<svg style="position:absolute;left:0;top:0;overflow:visible" width="1" height="1"><path d="M418.0 113.5 L420.5 116.0 L423.0 113.5" stroke="#606060" stroke-width="1.1" fill="none"/></svg>
<div style="position:absolute;left:429px;top:104px;width:191px;height:22px;background:linear-gradient(#f0f0f0,#e5e5e5);border:1px solid #acacac;box-sizing:border-box;"></div>
<div class="t clip" style="left:435.7px;top:106px;width:162.3px;height:19px;line-height:20px;">Шайба ГОСТ 11371-78</div>
<svg style="position:absolute;left:0;top:0;overflow:visible" width="1" height="1"><path d="M608.0 113.5 L610.5 116.0 L613.0 113.5" stroke="#606060" stroke-width="1.1" fill="none"/></svg>
<div style="position:absolute;left:619px;top:104px;width:191px;height:22px;background:linear-gradient(#f0f0f0,#e5e5e5);border:1px solid #acacac;box-sizing:border-box;"></div>
<div class="t clip" style="left:625.7px;top:106px;width:162.3px;height:19px;line-height:20px;">Шайба косая ГОСТ 10906-78</div>
<svg style="position:absolute;left:0;top:0;overflow:visible" width="1" height="1"><path d="M798.0 113.5 L800.5 116.0 L803.0 113.5" stroke="#606060" stroke-width="1.1" fill="none"/></svg>
<div style="position:absolute;left:809px;top:104px;width:171px;height:22px;background:linear-gradient(#f0f0f0,#e5e5e5);border:1px solid #acacac;box-sizing:border-box;"></div>
<div class="t clip" style="left:815.7px;top:106px;width:142.3px;height:19px;line-height:20px;">Нет</div>
<svg style="position:absolute;left:0;top:0;overflow:visible" width="1" height="1"><path d="M968.0 113.5 L970.5 116.0 L973.0 113.5" stroke="#606060" stroke-width="1.1" fill="none"/></svg>
<div style="position:absolute;left:979px;top:104px;width:191px;height:22px;background:linear-gradient(#f0f0f0,#e5e5e5);border:1px solid #acacac;box-sizing:border-box;"></div>
<div class="t clip" style="left:985.7px;top:106px;width:162.3px;height:19px;line-height:20px;">Гайка ГОСТ 5915-70</div>
<svg style="position:absolute;left:0;top:0;overflow:visible" width="1" height="1"><path d="M1158.0 113.5 L1160.5 116.0 L1163.0 113.5" stroke="#606060" stroke-width="1.1" fill="none"/></svg>
<div style="position:absolute;left:0px;top:126px;width:1051px;height:20px;background:#ffffff;"></div>
<div style="position:absolute;left:0px;top:146px;width:1051px;height:1px;background:#c5cbd0;"></div>
<div class="t" style="left:3.7px;top:126px;height:20px;line-height:20px;font-size:11.6px;">ГОСТ 52644-2006. Болт, 2 шайбы, гайка</div>
<div style="position:absolute;left:259px;top:125px;width:171px;height:22px;background:linear-gradient(#f0f0f0,#e5e5e5);border:1px solid #acacac;box-sizing:border-box;"></div>
<div class="t clip" style="left:265.7px;top:127px;width:142.3px;height:19px;line-height:20px;">Болт в.п. ГОСТ Р 52644-2006</div>
<svg style="position:absolute;left:0;top:0;overflow:visible" width="1" height="1"><path d="M418.0 134.5 L420.5 137.0 L423.0 134.5" stroke="#606060" stroke-width="1.1" fill="none"/></svg>
<div style="position:absolute;left:429px;top:125px;width:191px;height:22px;background:linear-gradient(#f0f0f0,#e5e5e5);border:1px solid #acacac;box-sizing:border-box;"></div>
<div class="t clip" style="left:435.7px;top:127px;width:162.3px;height:19px;line-height:20px;">Шайба в.п. ГОСТ Р 52646-2006</div>
<svg style="position:absolute;left:0;top:0;overflow:visible" width="1" height="1"><path d="M608.0 134.5 L610.5 137.0 L613.0 134.5" stroke="#606060" stroke-width="1.1" fill="none"/></svg>
<div style="position:absolute;left:619px;top:125px;width:191px;height:22px;background:linear-gradient(#f0f0f0,#e5e5e5);border:1px solid #acacac;box-sizing:border-box;"></div>
<div class="t clip" style="left:625.7px;top:127px;width:162.3px;height:19px;line-height:20px;">Шайба в.п. ГОСТ Р 52646-2006</div>
<svg style="position:absolute;left:0;top:0;overflow:visible" width="1" height="1"><path d="M798.0 134.5 L800.5 137.0 L803.0 134.5" stroke="#606060" stroke-width="1.1" fill="none"/></svg>
<div style="position:absolute;left:809px;top:125px;width:171px;height:22px;background:linear-gradient(#f0f0f0,#e5e5e5);border:1px solid #acacac;box-sizing:border-box;"></div>
<div class="t clip" style="left:815.7px;top:127px;width:142.3px;height:19px;line-height:20px;">Нет</div>
<svg style="position:absolute;left:0;top:0;overflow:visible" width="1" height="1"><path d="M968.0 134.5 L970.5 137.0 L973.0 134.5" stroke="#606060" stroke-width="1.1" fill="none"/></svg>
<div style="position:absolute;left:979px;top:125px;width:191px;height:22px;background:linear-gradient(#f0f0f0,#e5e5e5);border:1px solid #acacac;box-sizing:border-box;"></div>
<div class="t clip" style="left:985.7px;top:127px;width:162.3px;height:19px;line-height:20px;">Гайка в.п. ГОСТ Р 52645-2006</div>
<svg style="position:absolute;left:0;top:0;overflow:visible" width="1" height="1"><path d="M1158.0 134.5 L1160.5 137.0 L1163.0 134.5" stroke="#606060" stroke-width="1.1" fill="none"/></svg>
<div style="position:absolute;left:0px;top:147px;width:1051px;height:20px;background:#e0f7fe;"></div>
<div style="position:absolute;left:0px;top:167px;width:1051px;height:1px;background:#c5cbd0;"></div>
<div class="t" style="left:3.7px;top:147px;height:20px;line-height:20px;font-size:11.6px;">ГОСТ 28778-2023. Анкер (БСР)</div>
<div style="position:absolute;left:259px;top:146px;width:171px;height:22px;background:linear-gradient(#f0f0f0,#e5e5e5);border:1px solid #acacac;box-sizing:border-box;"></div>
<div class="t clip" style="left:265.7px;top:148px;width:142.3px;height:19px;line-height:20px;">Анкер (БСР) ГОСТ 28778-2023</div>
<svg style="position:absolute;left:0;top:0;overflow:visible" width="1" height="1"><path d="M418.0 155.5 L420.5 158.0 L423.0 155.5" stroke="#606060" stroke-width="1.1" fill="none"/></svg>
<div style="position:absolute;left:429px;top:146px;width:191px;height:22px;background:linear-gradient(#f0f0f0,#e5e5e5);border:1px solid #acacac;box-sizing:border-box;"></div>
<div class="t clip" style="left:435.7px;top:148px;width:162.3px;height:19px;line-height:20px;">Нет</div>
<svg style="position:absolute;left:0;top:0;overflow:visible" width="1" height="1"><path d="M608.0 155.5 L610.5 158.0 L613.0 155.5" stroke="#606060" stroke-width="1.1" fill="none"/></svg>
<div style="position:absolute;left:619px;top:146px;width:191px;height:22px;background:linear-gradient(#f0f0f0,#e5e5e5);border:1px solid #acacac;box-sizing:border-box;"></div>
<div class="t clip" style="left:625.7px;top:148px;width:162.3px;height:19px;line-height:20px;">Нет</div>
<svg style="position:absolute;left:0;top:0;overflow:visible" width="1" height="1"><path d="M798.0 155.5 L800.5 158.0 L803.0 155.5" stroke="#606060" stroke-width="1.1" fill="none"/></svg>
<div style="position:absolute;left:809px;top:146px;width:171px;height:22px;background:linear-gradient(#f0f0f0,#e5e5e5);border:1px solid #acacac;box-sizing:border-box;"></div>
<div class="t clip" style="left:815.7px;top:148px;width:142.3px;height:19px;line-height:20px;">Нет</div>
<svg style="position:absolute;left:0;top:0;overflow:visible" width="1" height="1"><path d="M968.0 155.5 L970.5 158.0 L973.0 155.5" stroke="#606060" stroke-width="1.1" fill="none"/></svg>
<div style="position:absolute;left:979px;top:146px;width:191px;height:22px;background:linear-gradient(#f0f0f0,#e5e5e5);border:1px solid #acacac;box-sizing:border-box;"></div>
<div class="t clip" style="left:985.7px;top:148px;width:162.3px;height:19px;line-height:20px;">Нет</div>
<svg style="position:absolute;left:0;top:0;overflow:visible" width="1" height="1"><path d="M1158.0 155.5 L1160.5 158.0 L1163.0 155.5" stroke="#606060" stroke-width="1.1" fill="none"/></svg>
<div style="position:absolute;left:0px;top:168px;width:1051px;height:20px;background:#ffffff;"></div>
<div style="position:absolute;left:0px;top:188px;width:1051px;height:1px;background:#c5cbd0;"></div>
<div class="t" style="left:3.7px;top:168px;height:20px;line-height:20px;font-size:11.6px;">ГОСТ 22042-76. Шпилька, 2 шайбы, 4 гайки</div>
<div style="position:absolute;left:259px;top:167px;width:171px;height:22px;background:linear-gradient(#f0f0f0,#e5e5e5);border:1px solid #acacac;box-sizing:border-box;"></div>
<div class="t clip" style="left:265.7px;top:169px;width:142.3px;height:19px;line-height:20px;">Шпилька ГОСТ 22042-76</div>
<svg style="position:absolute;left:0;top:0;overflow:visible" width="1" height="1"><path d="M418.0 176.5 L420.5 179.0 L423.0 176.5" stroke="#606060" stroke-width="1.1" fill="none"/></svg>
<div style="position:absolute;left:429px;top:167px;width:191px;height:22px;background:linear-gradient(#f0f0f0,#e5e5e5);border:1px solid #acacac;box-sizing:border-box;"></div>
<div class="t clip" style="left:435.7px;top:169px;width:162.3px;height:19px;line-height:20px;">Шайба ГОСТ 11371-78</div>
<svg style="position:absolute;left:0;top:0;overflow:visible" width="1" height="1"><path d="M608.0 176.5 L610.5 179.0 L613.0 176.5" stroke="#606060" stroke-width="1.1" fill="none"/></svg>
<div style="position:absolute;left:619px;top:167px;width:191px;height:22px;background:linear-gradient(#f0f0f0,#e5e5e5);border:1px solid #acacac;box-sizing:border-box;"></div>
<div class="t clip" style="left:625.7px;top:169px;width:162.3px;height:19px;line-height:20px;">Шайба ГОСТ 11371-78</div>
<svg style="position:absolute;left:0;top:0;overflow:visible" width="1" height="1"><path d="M798.0 176.5 L800.5 179.0 L803.0 176.5" stroke="#606060" stroke-width="1.1" fill="none"/></svg>
<div style="position:absolute;left:809px;top:167px;width:171px;height:22px;background:linear-gradient(#f0f0f0,#e5e5e5);border:1px solid #acacac;box-sizing:border-box;"></div>
<div class="t clip" style="left:815.7px;top:169px;width:142.3px;height:19px;line-height:20px;">Нет</div>
<svg style="position:absolute;left:0;top:0;overflow:visible" width="1" height="1"><path d="M968.0 176.5 L970.5 179.0 L973.0 176.5" stroke="#606060" stroke-width="1.1" fill="none"/></svg>
<div style="position:absolute;left:979px;top:167px;width:191px;height:22px;background:linear-gradient(#f0f0f0,#e5e5e5);border:1px solid #acacac;box-sizing:border-box;"></div>
<div class="t clip" style="left:985.7px;top:169px;width:162.3px;height:19px;line-height:20px;">Гайка ГОСТ 5915-70</div>
<svg style="position:absolute;left:0;top:0;overflow:visible" width="1" height="1"><path d="M1158.0 176.5 L1160.5 179.0 L1163.0 176.5" stroke="#606060" stroke-width="1.1" fill="none"/></svg>
<div style="position:absolute;left:0px;top:189px;width:1051px;height:20px;background:#e0f7fe;"></div>
<div style="position:absolute;left:0px;top:209px;width:1051px;height:1px;background:#c5cbd0;"></div>
<div class="t" style="left:3.7px;top:189px;height:20px;line-height:20px;font-size:11.6px;">Анкер HILTI HST</div>
<div style="position:absolute;left:259px;top:188px;width:171px;height:22px;background:linear-gradient(#f0f0f0,#e5e5e5);border:1px solid #acacac;box-sizing:border-box;"></div>
<div class="t clip" style="left:265.7px;top:190px;width:142.3px;height:19px;line-height:20px;">Анкер HILTI HST</div>
<svg style="position:absolute;left:0;top:0;overflow:visible" width="1" height="1"><path d="M418.0 197.5 L420.5 200.0 L423.0 197.5" stroke="#606060" stroke-width="1.1" fill="none"/></svg>
<div style="position:absolute;left:429px;top:188px;width:191px;height:22px;background:linear-gradient(#f0f0f0,#e5e5e5);border:1px solid #acacac;box-sizing:border-box;"></div>
<div class="t clip" style="left:435.7px;top:190px;width:162.3px;height:19px;line-height:20px;">Нет</div>
<svg style="position:absolute;left:0;top:0;overflow:visible" width="1" height="1"><path d="M608.0 197.5 L610.5 200.0 L613.0 197.5" stroke="#606060" stroke-width="1.1" fill="none"/></svg>
<div style="position:absolute;left:619px;top:188px;width:191px;height:22px;background:linear-gradient(#f0f0f0,#e5e5e5);border:1px solid #acacac;box-sizing:border-box;"></div>
<div class="t clip" style="left:625.7px;top:190px;width:162.3px;height:19px;line-height:20px;">Нет</div>
<svg style="position:absolute;left:0;top:0;overflow:visible" width="1" height="1"><path d="M798.0 197.5 L800.5 200.0 L803.0 197.5" stroke="#606060" stroke-width="1.1" fill="none"/></svg>
<div style="position:absolute;left:809px;top:188px;width:171px;height:22px;background:linear-gradient(#f0f0f0,#e5e5e5);border:1px solid #acacac;box-sizing:border-box;"></div>
<div class="t clip" style="left:815.7px;top:190px;width:142.3px;height:19px;line-height:20px;">Нет</div>
<svg style="position:absolute;left:0;top:0;overflow:visible" width="1" height="1"><path d="M968.0 197.5 L970.5 200.0 L973.0 197.5" stroke="#606060" stroke-width="1.1" fill="none"/></svg>
<div style="position:absolute;left:979px;top:188px;width:191px;height:22px;background:linear-gradient(#f0f0f0,#e5e5e5);border:1px solid #acacac;box-sizing:border-box;"></div>
<div class="t clip" style="left:985.7px;top:190px;width:162.3px;height:19px;line-height:20px;">Нет</div>
<svg style="position:absolute;left:0;top:0;overflow:visible" width="1" height="1"><path d="M1158.0 197.5 L1160.5 200.0 L1163.0 197.5" stroke="#606060" stroke-width="1.1" fill="none"/></svg>
</div>
<div style="position:absolute;left:1062px;top:404px;width:17px;height:230px;background:#f0f0f0;"></div>
<div style="position:absolute;left:1062px;top:445px;width:17px;height:141px;background:#cdcdcd;"></div>
<svg style="position:absolute;left:0;top:0;overflow:visible" width="1" height="1"><path d="M1067.0 439.25 L1070.5 434.75 L1074.0 439.25" stroke="#a0a0a0" stroke-width="1.3" fill="none"/></svg>
<svg style="position:absolute;left:0;top:0;overflow:visible" width="1" height="1"><path d="M1067.0 624.35 L1070.5 628.85 L1074.0 624.35" stroke="#8a8a8a" stroke-width="1.3" fill="none"/></svg>
<div style="position:absolute;left:11px;top:634px;width:1051px;height:17px;background:#f0f0f0;"></div>
<div style="position:absolute;left:28px;top:634px;width:855px;height:17px;background:#cdcdcd;"></div>
<div style="position:absolute;left:1062px;top:634px;width:17px;height:17px;background:#f0f0f0;"></div>
<svg style="position:absolute;left:0;top:0;overflow:visible" width="1" height="1"><path d="M21.75 639.0 L17.25 642.5 L21.75 646.0" stroke="#8a8a8a" stroke-width="1.3" fill="none"/></svg>
<svg style="position:absolute;left:0;top:0;overflow:visible" width="1" height="1"><path d="M1050.35 639.0 L1054.85 642.5 L1050.35 646.0" stroke="#8a8a8a" stroke-width="1.3" fill="none"/></svg>
<div style="position:absolute;left:5px;top:663px;width:90px;height:24px;background:#dddddd;border:1px solid #707070;box-sizing:border-box;"></div>
<svg style="position:absolute;left:10px;top:666px" width="18" height="18" viewBox="0 0 18 18"><path d="M7.5 1.5 H10.5 V7.5 H16.5 V10.5 H10.5 V16.5 H7.5 V10.5 H1.5 V7.5 H7.5 Z" fill="#fbd9a2" stroke="#8a6228" stroke-width="1"/></svg>
<div class="t" style="left:34px;top:664px;height:22px;line-height:22px;line-height:23px;">Добавить</div>
<div style="position:absolute;left:100px;top:663px;width:90px;height:24px;background:#dddddd;border:1px solid #707070;box-sizing:border-box;"></div>
<svg style="position:absolute;left:109px;top:672px" width="18" height="6" viewBox="0 0 18 6"><rect x="1.5" y="1.5" width="15" height="3" fill="#fde4c4" stroke="#7d6331" stroke-width="1"/></svg>
<div class="t" style="left:133.7px;top:664px;height:22px;line-height:22px;line-height:23px;">Удалить</div>
<div style="position:absolute;left:195px;top:663px;width:90px;height:24px;background:#dddddd;border:1px solid #707070;box-sizing:border-box;"></div>
<svg style="position:absolute;left:209px;top:666px" width="18" height="17" viewBox="0 0 18 17"><path d="M9.5 1 L16.5 8.5 H11.8 V15.5 H7.2 V8.5 H2.5 Z" fill="#fbd9a2" stroke="#8a6228" stroke-width="1"/></svg>
<div class="t" style="left:234.9px;top:664px;height:22px;line-height:22px;line-height:23px;">Вверх</div>
<div style="position:absolute;left:290px;top:663px;width:90px;height:24px;background:#dddddd;border:1px solid #707070;box-sizing:border-box;"></div>
<svg style="position:absolute;left:308px;top:667px" width="17" height="17" viewBox="0 0 17 17"><path d="M6.2 1.2 H10.5 V8.4 H15.5 L8.5 15.8 L1.2 8.4 H6.2 Z" fill="#fbd9a2" stroke="#8a6228" stroke-width="1"/></svg>
<div class="t" style="left:333.2px;top:664px;height:22px;line-height:22px;line-height:23px;">Вниз</div>
<div style="position:absolute;left:385px;top:663px;width:140px;height:24px;background:#dddddd;border:1px solid #707070;box-sizing:border-box;"></div>
<svg style="position:absolute;left:397px;top:665px" width="19" height="19" viewBox="0 0 19 19"><path d="M1.5 1.5 H17.5 V17.5 H4 L1.5 15 Z" fill="#fbd9a2" stroke="#8a6228" stroke-width="1"/><rect x="3.8" y="1.8" width="11.5" height="7.2" fill="#fff7e6" stroke="#8a6228" stroke-width="1"/><rect x="4.8" y="11.5" width="8" height="6" fill="#fff3dc" stroke="#8a6228" stroke-width="1"/><rect x="6" y="13" width="1.2" height="2.5" fill="#6b5a40"/></svg>
<div class="t" style="left:423.1px;top:664px;height:22px;line-height:22px;line-height:23px;">Сохранить базу</div>
<div style="position:absolute;left:530px;top:663px;width:200px;height:24px;background:#dddddd;border:1px solid #707070;box-sizing:border-box;"></div>
<svg style="position:absolute;left:540px;top:665px" width="20" height="19" viewBox="0 0 20 19"><path d="M6 4 Q2 7.5 3.5 12.5 Q4.5 15 6.5 16" fill="none" stroke="#8a6228" stroke-width="2.6"/><path d="M6 4 Q2 7.5 3.5 12.5 Q4.5 15 6.5 16" fill="none" stroke="#fbd9a2" stroke-width="1"/><path d="M13.5 15 Q17.5 11.5 16 6.5 Q15 4 13 3" fill="none" stroke="#8a6228" stroke-width="2.6"/><path d="M13.5 15 Q17.5 11.5 16 6.5 Q15 4 13 3" fill="none" stroke="#fbd9a2" stroke-width="1"/><path d="M2.5 2.5 H9.5 L7 7 Z" fill="#dfa04c" stroke="#8a6228" stroke-width="0.8"/><path d="M17 16.5 H10 L12.5 12 Z" fill="#dfa04c" stroke="#8a6228" stroke-width="0.8"/></svg>
<div class="t" style="left:566px;top:664px;height:22px;line-height:22px;line-height:23px;">Восстановить исходную БД</div></body></html>
